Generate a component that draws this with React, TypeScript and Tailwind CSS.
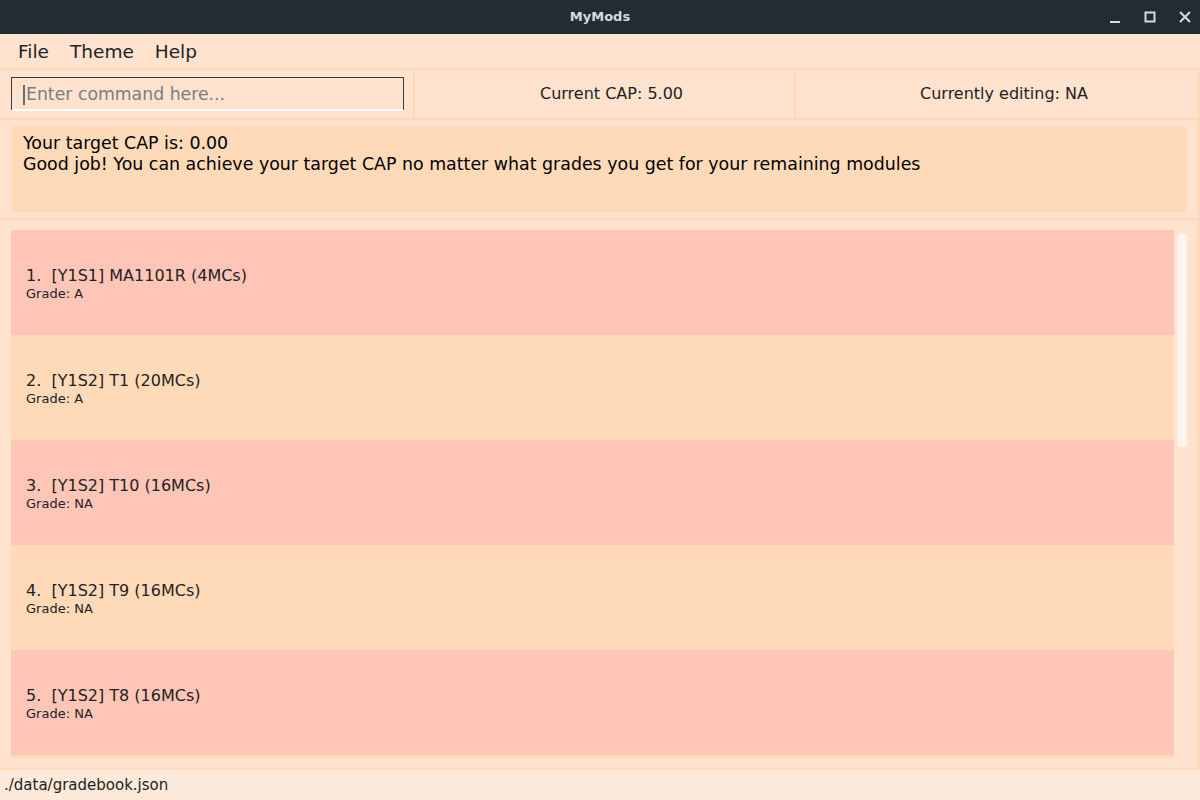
import React from "react";

const modules = [
  { title: "1.  [Y1S1] MA1101R (4MCs)", grade: "A" },
  { title: "2.  [Y1S2] T1 (20MCs)", grade: "A" },
  { title: "3.  [Y1S2] T10 (16MCs)", grade: "NA" },
  { title: "4.  [Y1S2] T9 (16MCs)", grade: "NA" },
  { title: "5.  [Y1S2] T8 (16MCs)", grade: "NA" },
];

const font = { fontFamily: '"DejaVu Sans", Verdana, sans-serif' };

export default function App() {
  return (
    <div
      className="w-[1200px] h-[800px] flex flex-col bg-[#ffe3cf] text-[#1e1e1e] overflow-hidden"
      style={font}
    >
      {/* Title bar */}
      <div className="h-[34px] shrink-0 bg-[#232c33] flex items-center relative">
        <div className="flex-1 text-center text-[13px] font-bold text-[#d5dbdf]">MyMods</div>
        <div className="absolute right-0 top-0 h-full flex items-center gap-[19px] pr-[7px] text-[#d5dbdf]">
          <svg width="16" height="16" viewBox="0 0 16 16">
            <rect x="3" y="12" width="10" height="2" fill="currentColor" />
          </svg>
          <svg width="16" height="16" viewBox="0 0 16 16">
            <rect x="3.5" y="3.5" width="9" height="9" fill="none" stroke="currentColor" strokeWidth="2" />
          </svg>
          <svg width="16" height="16" viewBox="0 0 16 16">
            <path d="M3 3 L13 13 M13 3 L3 13" stroke="currentColor" strokeWidth="2" />
          </svg>
        </div>
      </div>

      {/* Menu bar */}
      <div className="h-[34px] shrink-0 flex items-center gap-[21px] pl-[18px] pt-[2px] text-[18.5px] text-[#222]">
        <span>File</span>
        <span>Theme</span>
        <span>Help</span>
      </div>

      {/* Command row */}
      <div className="h-[52px] shrink-0 flex border-y-2 border-[#ffd8b6] border-r-2">
        <div className="w-[415px] flex items-center pl-[11px] pr-[9px] border-r-2 border-[#ffd8b6]">
          <div className="w-[395px] h-[34px] border border-[#3a3a3a] border-b-white border-b-2 flex items-center pl-[11px] pt-[2px] text-[17.3px] text-[#7d7d7d]">
            <span className="w-[2px] h-[20px] bg-[#6c6c6c] mr-[1px]" />
            <span>Enter command here...</span>
          </div>
        </div>
        <div className="w-[381px] flex items-center justify-center pl-[14px] text-[16px] border-r-2 border-[#ffd8b6]">
          Current CAP: 5.00
        </div>
        <div className="flex-1 flex items-center justify-center pl-[14px] text-[16px]">
          Currently editing: NA
        </div>
      </div>

      {/* Result display */}
      <div className="h-[100px] shrink-0 pt-[6px] pl-[12px] pr-[12px] pb-[6px] border-b-2 border-[#ffd8b6] border-r-2">
        <div className="h-[86px] bg-[#fedab9] rounded-[3px] pl-[11px] pt-[7px] text-[17.4px] leading-[21px] text-black">
          <div>Your target CAP is: 0.00</div>
          <div>Good job! You can achieve your target CAP no matter what grades you get for your remaining modules</div>
        </div>
      </div>

      {/* Module list */}
      <div className="flex-1 flex pl-[11px] pt-[10px] border-r-2 border-[#ffd8b6]">
        <div className="w-[1163px] flex flex-col bg-[#fedab9] self-start pb-[3px]">
          {modules.map((m, i) => (
            <div
              key={i}
              className={`h-[105px] flex flex-col justify-center pl-[15px] pt-[3px] ${
                i % 2 === 0 ? "bg-[#ffc6b8]" : "bg-[#fedab9]"
              }`}
            >
              <div className="text-[16px] leading-[20px] text-[#222] whitespace-pre">{m.title}</div>
              <div className="text-[13px] leading-[16px] text-[#222]">Grade: {m.grade}</div>
            </div>
          ))}
        </div>
        <div className="pl-[3px] pt-[4px]">
          <div className="w-[10px] h-[213px] bg-[#fff5ef] rounded-[4px]" />
        </div>
      </div>

      {/* Status bar */}
      <div className="h-[32px] shrink-0 bg-[#feeadb] border-t-2 border-[#ffdcbe] flex items-center pl-[4px] text-[15px] text-[#222]">
        ./data/gradebook.json
      </div>
    </div>
  );
}
